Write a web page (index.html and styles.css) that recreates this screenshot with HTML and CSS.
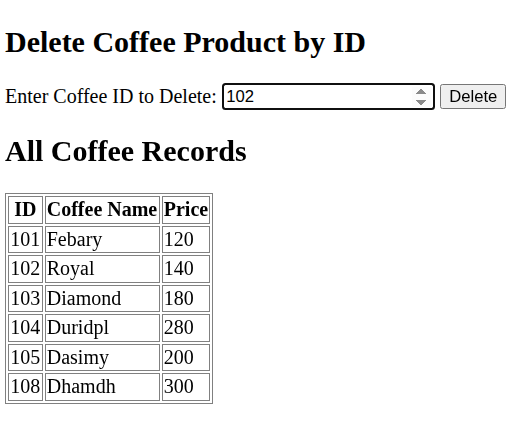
FILE: index.html
```html
<!DOCTYPE html>
<html>
<head>
<meta charset="utf-8">
<title>Delete Coffee</title>
<link rel="stylesheet" href="styles.css">
</head>
<body>
<div class="page">
<h2 class="title">Delete Coffee Product by ID</h2>
<form class="del-form">
  <label for="cid">Enter Coffee ID to Delete:</label>
  <input type="number" id="cid" class="id-input" value="102" autofocus>
  <button type="button" class="del-btn">Delete</button>
</form>
<h2 class="title">All Coffee Records</h2>
<table class="records">
  <tr><th>ID</th><th>Coffee Name</th><th>Price</th></tr>
  <tr><td>101</td><td>Febary</td><td>120</td></tr>
  <tr><td>102</td><td>Royal</td><td>140</td></tr>
  <tr><td>103</td><td>Diamond</td><td>180</td></tr>
  <tr><td>104</td><td>Duridpl</td><td>280</td></tr>
  <tr><td>105</td><td>Dasimy</td><td>200</td></tr>
  <tr><td>108</td><td>Dhamdh</td><td>300</td></tr>
</table>
</div>
</body>
</html>
```
FILE: styles.css
```css
body {
  margin: 0;
  font-family: "Liberation Serif", "Times New Roman", serif;
  font-size: 16px;
  color: #000;
  background: #fff;
}
.page {
  zoom: 1.25;
  padding: 0 4px 4px;
}
.title {
  font-size: 24px;
  font-weight: bold;
  margin: 20px 0;
}
.del-form {
  margin: 0;
  display: flex;
  align-items: center;
  gap: 4.8px;
}
.id-input {
  font-family: "Liberation Sans", Arial, sans-serif;
  font-size: 13.33px;
  width: 169px;
  box-sizing: border-box;
  height: 20px;
  border: 1px solid #767676;
  border-radius: 2px;
  padding: 1px 2px;
  outline: 2px solid #101010;
  outline-offset: -1px;
}
.del-btn {
  font-family: "Liberation Sans", Arial, sans-serif;
  font-size: 13.33px;
  height: 20px;
  padding: 1px 6.5px;
  border: 1px solid #767676;
  border-radius: 2px;
  background: #efefef;
  color: #000;
}
.records {
  border-collapse: separate;
  border-spacing: 2px;
  border: 1px solid #808080;
}
.records th, .records td {
  border: 1px solid #808080;
  padding: 1px;
  text-align: left;
}
.records th { text-align: center; }
```
